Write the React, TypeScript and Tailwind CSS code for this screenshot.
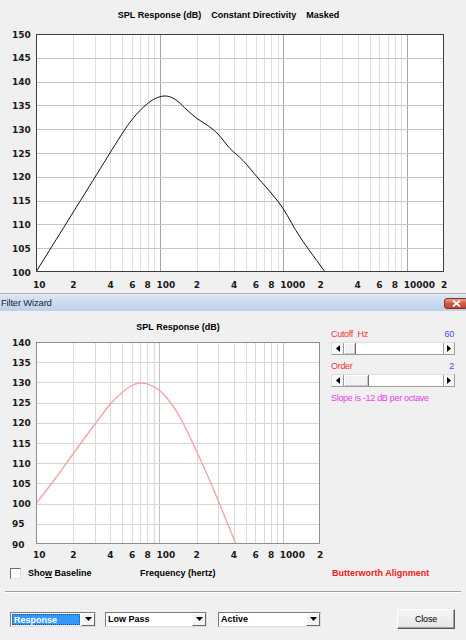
import React from "react";

type Pt = [number, number];

function smoothPath(pts: Pt[]): string {
  let d = `M${pts[0][0]},${pts[0][1]}`;
  for (let i = 0; i < pts.length - 1; i++) {
    const p0 = pts[i - 1] || pts[i];
    const p1 = pts[i];
    const p2 = pts[i + 1];
    const p3 = pts[i + 2] || p2;
    const c1x = p1[0] + (p2[0] - p0[0]) / 6;
    const c1y = p1[1] + (p2[1] - p0[1]) / 6;
    const c2x = p2[0] - (p3[0] - p1[0]) / 6;
    const c2y = p2[1] - (p3[1] - p1[1]) / 6;
    d += ` C${c1x.toFixed(2)},${c1y.toFixed(2)} ${c2x.toFixed(2)},${c2y.toFixed(2)} ${p2[0]},${p2[1]}`;
  }
  return d;
}

const AXIS_FONT = "'DejaVu Sans', sans-serif";

type ChartProps = {
  left: number;
  right: number;
  top: number;
  bottom: number;
  maxF: number;
  dbMax: number;
  dbMin: number;
  labels: [number, string][];
  labelY: number;
  viewBox: string;
  width: number;
  height: number;
  frame: string;
  hGrid: string;
  vMinor: string;
  vMajor: string;
  curve: Pt[];
  curveColor: string;
  curveWidth: number;
  id: string;
};

function Chart(p: ChartProps) {
  const decadePx = (p.right - p.left) / Math.log10(p.maxF / 10);
  const fx = (f: number) => p.left + decadePx * Math.log10(f / 10);
  const freqs: number[] = [];
  for (let dec = 10; dec < p.maxF; dec *= 10) {
    for (let m = 1; m < 10; m++) {
      const f = dec * m;
      if (f > 10 && f < p.maxF) freqs.push(f);
    }
  }
  const steps = (p.dbMax - p.dbMin) / 5;
  const dy = (p.bottom - p.top) / steps;
  const rows: number[] = [];
  for (let i = 0; i <= steps; i++) rows.push(i);
  return (
    <svg width={p.width} height={p.height} viewBox={p.viewBox} className="block">
      <defs>
        <clipPath id={p.id}>
          <rect x={p.left} y={p.top} width={p.right - p.left} height={p.bottom - p.top} />
        </clipPath>
      </defs>
      <rect x={p.left} y={p.top} width={p.right - p.left} height={p.bottom - p.top} fill="#ffffff" />
      {freqs.map((f) => {
        const x = Math.round(fx(f)) + 0.5;
        const major = Math.abs(Math.log10(f) - Math.round(Math.log10(f))) < 1e-6;
        return (
          <line
            key={f}
            x1={x}
            x2={x}
            y1={p.top}
            y2={p.bottom}
            stroke={major ? p.vMajor : p.vMinor}
            strokeWidth={1}
          />
        );
      })}
      {rows.slice(1, -1).map((i) => {
        const y = Math.round(p.top + i * dy) + 0.5;
        return <line key={i} x1={p.left} x2={p.right} y1={y} y2={y} stroke={p.hGrid} strokeWidth={1} />;
      })}
      <path
        d={smoothPath(p.curve)}
        fill="none"
        stroke={p.curveColor}
        strokeWidth={p.curveWidth}
        clipPath={`url(#${p.id})`}
      />
      <rect
        x={p.left + 0.5}
        y={p.top + 0.5}
        width={p.right - p.left - 1}
        height={p.bottom - p.top - 1}
        fill="none"
        stroke={p.frame}
        strokeWidth={1}
      />
      {rows.map((i) => {
        const y = p.top + i * dy;
        return (
          <text
            key={i}
            x={12}
            y={y + 0.5}
            dominantBaseline="central"
            fontFamily={AXIS_FONT}
            fontWeight="bold"
            fontSize={9}
            fill="#1a1a1a"
          >
            {p.dbMax - i * 5}
          </text>
        );
      })}
      {p.labels.map(([f, t]) => (
        <text
          key={f}
          x={fx(f) - 3}
          y={p.labelY}
          dominantBaseline="central"
          fontFamily={AXIS_FONT}
          fontWeight="bold"
          fontSize={9}
          fill="#1a1a1a"
        >
          {t}
        </text>
      ))}
    </svg>
  );
}

const topCurve: Pt[] = [
  [36, 272],
  [60, 233.4],
  [93, 180.4],
  [120, 137],
  [131, 121],
  [141, 109.5],
  [151, 101],
  [159, 97],
  [165, 96],
  [171, 97.2],
  [178, 101.5],
  [187, 110],
  [197, 118.5],
  [207, 125],
  [218, 134],
  [230, 148.5],
  [243, 160.5],
  [258, 178],
  [272, 194],
  [284, 210],
  [300, 237],
  [325, 272],
  [330, 280],
];

const lowCurve: Pt[] = [
  [36, 503.6],
  [55, 479],
  [73, 454],
  [95, 424],
  [110, 404.5],
  [122, 392.5],
  [132, 385.5],
  [140, 383],
  [148, 384.2],
  [159, 390],
  [170, 402],
  [181, 419],
  [196, 450],
  [210, 481],
  [222, 510],
  [236, 544],
  [239, 552],
];

const topLabels: [number, string][] = [
  [10, "10"],
  [20, "2"],
  [40, "4"],
  [60, "6"],
  [80, "8"],
  [100, "100"],
  [200, "2"],
  [400, "4"],
  [600, "6"],
  [800, "8"],
  [1000, "1000"],
  [2000, "2"],
  [4000, "4"],
  [6000, "6"],
  [8000, "8"],
  [10000, "10000"],
  [20000, "2"],
];

const lowLabels: [number, string][] = [
  [10, "10"],
  [20, "2"],
  [40, "4"],
  [60, "6"],
  [80, "8"],
  [100, "100"],
  [200, "2"],
  [400, "4"],
  [600, "6"],
  [800, "8"],
  [1000, "1000"],
  [2000, "2"],
];

function Arrow({ dir }: { dir: "left" | "right" | "down" }) {
  if (dir === "down")
    return (
      <svg width="7" height="4" viewBox="0 0 7 4">
        <path d="M0 0 H7 L3.5 4 Z" fill="#000" />
      </svg>
    );
  return (
    <svg width="4" height="7" viewBox="0 0 4 7">
      {dir === "left" ? <path d="M4 0 V7 L0 3.5 Z" fill="#000" /> : <path d="M0 0 V7 L4 3.5 Z" fill="#000" />}
    </svg>
  );
}

function ScrollBar({ thumb }: { thumb: number }) {
  return (
    <div className="flex h-[13px] w-[124px] border border-t-[#e0e0e0] border-l-[#e0e0e0] border-b-[#9a9a9a] border-r-[#9a9a9a] bg-white">
      <div className="flex h-full w-[12px] items-center justify-center border-r border-[#a0a0a0] bg-[#f7f7f7]">
        <Arrow dir="left" />
      </div>
      <div
        className="h-full border-r border-[#6f6f6f] bg-[#f3f3f3] shadow-[inset_1px_1px_0_#ffffff,inset_-1px_-1px_0_#c8c8c8]"
        style={{ width: thumb }}
      />
      <div className="h-full flex-1 bg-white" />
      <div className="flex h-full w-[11px] items-center justify-center border-l border-[#a0a0a0] bg-[#f7f7f7]">
        <Arrow dir="right" />
      </div>
    </div>
  );
}

function Combo({ width, text, selected }: { width: number; text: string; selected?: boolean }) {
  return (
    <div
      className="flex h-[15px] border border-t-[#7a7a7a] border-l-[#7a7a7a] border-b-[#dcdcdc] border-r-[#dcdcdc] bg-white"
      style={{ width }}
    >
      <div className="h-full flex-1 p-px">
        {selected ? (
          <div className="h-full border border-dotted border-[#1f4f99] bg-[#3399ff] pl-[1px] text-[9px] font-bold leading-[11px] text-white">
            {text}
          </div>
        ) : (
          <div className="h-full pl-[1px] text-[9px] font-bold leading-[11px] text-black">{text}</div>
        )}
      </div>
      <div className="flex h-full w-[14px] items-center justify-center border border-t-white border-l-white border-b-[#6a6a6a] border-r-[#6a6a6a] bg-[#f4f4f4]">
        <Arrow dir="down" />
      </div>
    </div>
  );
}

export default function App() {
  return (
    <div className="h-[640px] w-[466px] overflow-hidden bg-[#f0f0f0] font-['Liberation_Sans',Arial,sans-serif] text-black">
      {/* Top chart window */}
      <div className="h-[293px]">
        <div className="h-[22px] pr-[9px] pt-[9px] text-center text-[9px] font-bold leading-[12px] whitespace-pre">
          {"SPL Response (dB)    Constant Directivity    Masked"}
        </div>
        <Chart
          id="clipTop"
          left={36}
          right={444}
          top={34}
          bottom={272}
          maxF={20000}
          dbMax={150}
          dbMin={100}
          labels={topLabels}
          labelY={284.5}
          viewBox="0 22 466 271"
          width={466}
          height={271}
          frame="#3c3c3c"
          hGrid="#c6c6c6"
          vMinor="#e0e0e0"
          vMajor="#a4a4a4"
          curve={topCurve}
          curveColor="#111111"
          curveWidth={1}
        />
      </div>
      <div className="h-px bg-[#a9a9a9]" />
      {/* Title bar */}
      <div className="flex h-[17px] items-center justify-between border-t border-[#eaf1f9] bg-gradient-to-b from-[#d9e5f3] to-[#bcd1ea]">
        <div className="pl-[1px] text-[9.5px] leading-[12px] tracking-[-0.2px] text-[#1c2838]">Filter Wizard</div>
        <div className="mr-[-2px] flex h-[11px] w-[24px] items-center justify-center rounded-[3px] border border-[#8a2a20] bg-gradient-to-b from-[#e8a090] via-[#cf5a45] to-[#c04530]">
          <svg width="9" height="7" viewBox="0 0 9 7">
            <path d="M1 0.5 L8 6.5 M8 0.5 L1 6.5" stroke="#ffffff" strokeWidth="1.8" />
          </svg>
        </div>
      </div>
      {/* Dialog body */}
      <div className="flex">
        <div className="w-[325px]">
          <div className="h-[24px] pl-[36px] pr-[5px] pt-[10px] text-center text-[9px] font-bold leading-[12px]">
            SPL Response (dB)
          </div>
          <Chart
            id="clipLow"
            left={36}
            right={320}
            top={342}
            bottom={544}
            maxF={2000}
            dbMax={140}
            dbMin={90}
            labels={lowLabels}
            labelY={555}
            viewBox="0 335 325 230"
            width={325}
            height={230}
            frame="#8e8e8e"
            hGrid="#d6d6d6"
            vMinor="#dadada"
            vMajor="#c2c2c2"
            curve={lowCurve}
            curveColor="#f7a3a3"
            curveWidth={1.4}
          />
        </div>
        <div className="ml-[6px] w-[124px] pt-[17px] text-[9px] leading-[12px] tracking-[-0.3px]">
          <div className="flex justify-between">
            <span className="whitespace-pre text-[#ee3333]">{"Cutoff  Hz"}</span>
            <span className="pr-[1px] text-[#4848ff]">60</span>
          </div>
          <div className="mt-[2px]">
            <ScrollBar thumb={12} />
          </div>
          <div className="mt-[5px] flex justify-between">
            <span className="text-[#ee3333]">Order</span>
            <span className="pr-[1px] text-[#4848ff]">2</span>
          </div>
          <div className="mt-[2px]">
            <ScrollBar thumb={25} />
          </div>
          <div className="mt-[5px] text-[#ea3cea]">Slope is -12 dB per octave</div>
        </div>
      </div>
      {/* Checkbox row */}
      <div className="flex h-[16px] items-center text-[9px] font-bold leading-[12px]">
        <div className="flex w-[140px] items-center pl-[10px]">
          <div className="h-[11px] w-[11px] border border-t-[#6e6e6e] border-l-[#6e6e6e] border-b-[#e2e2e2] border-r-[#e2e2e2] bg-white" />
          <span className="ml-[7px]">
            Sho<span className="underline">w</span> Baseline
          </span>
        </div>
        <div className="w-[192px]">Frequency (hertz)</div>
        <div className="text-[#f01818]">Butterworth Alignment</div>
      </div>
      {/* Separator */}
      <div className="mx-[5px] mt-[10px] h-[2px] border-t border-[#a0a0a0] border-b border-b-white" />
      {/* Bottom controls */}
      <div className="mt-[16px] flex h-[20px] items-center pl-[10px]">
        <Combo width={86} text="Response" selected />
        <div className="ml-[9px]">
          <Combo width={102} text="Low Pass" />
        </div>
        <div className="ml-[11px]">
          <Combo width={103} text="Active" />
        </div>
        <div className="ml-auto mr-[11px] flex h-[20px] w-[58px] items-center justify-center border border-t-white border-l-white border-b-[#5a5a5a] border-r-[#5a5a5a] bg-gradient-to-b from-[#f6f6f6] to-[#e6e6e6] text-[9px] leading-[12px] tracking-[-0.2px] shadow-[inset_-1px_-1px_0_#a0a0a0]">
          Close
        </div>
      </div>
    </div>
  );
}
